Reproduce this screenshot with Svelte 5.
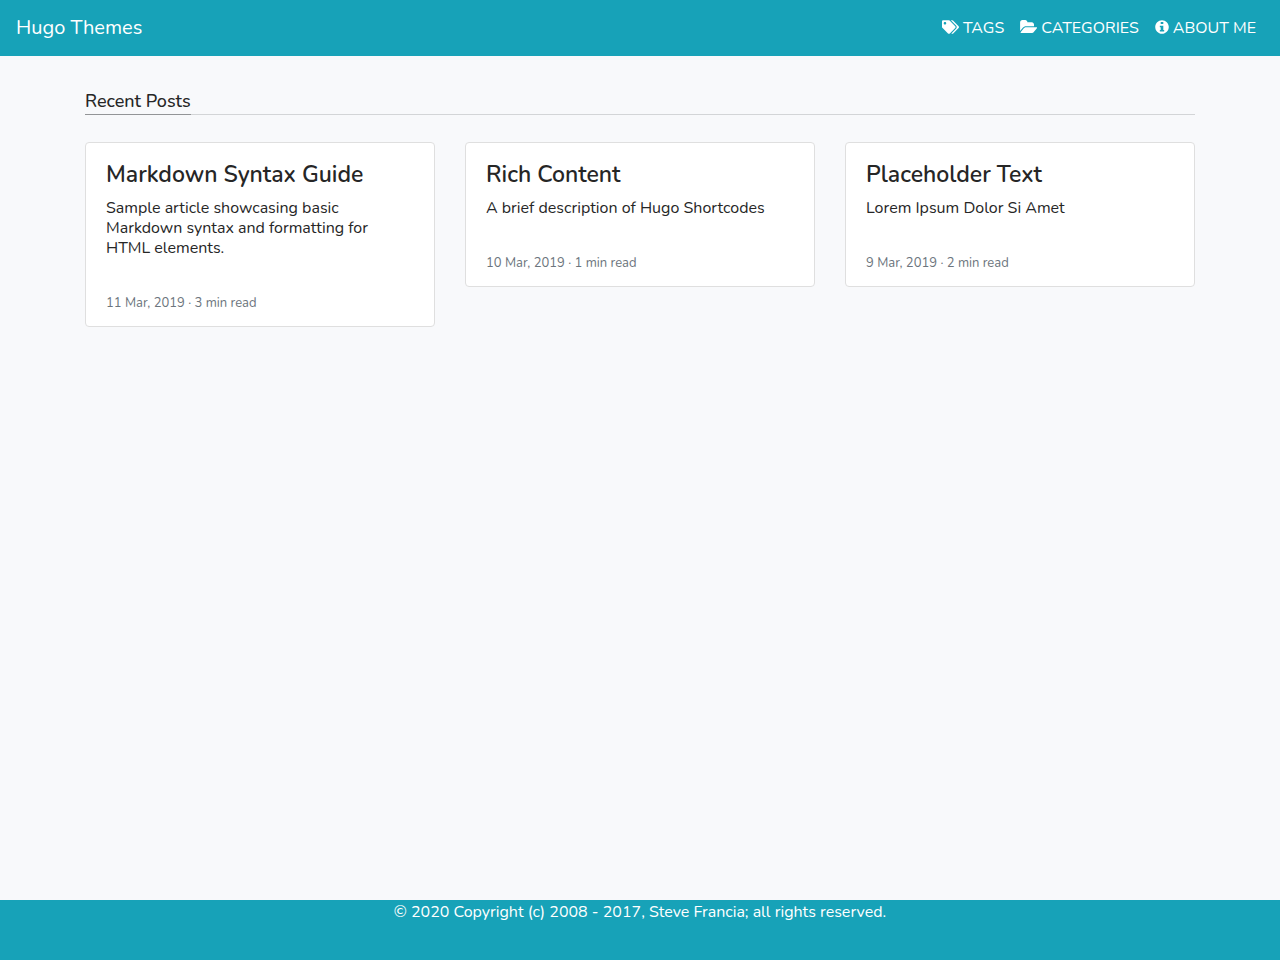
<script>
  const links = [
    { label: 'TAGS', icon: 'tags', href: '#tags' },
    { label: 'CATEGORIES', icon: 'folder', href: '#categories' },
    { label: 'ABOUT ME', icon: 'info', href: '#about' }
  ];

  // Solid glyphs: width in pixels, viewBox and path
  const icons = {
    tags: {
      width: 17,
      box: '0 0 640 512',
      d: 'M497.941 225.941L286.059 14.059A48 48 0 0 0 252.118 0H48C21.49 0 0 21.49 0 48v204.118a48 48 0 0 0 14.059 33.941l211.882 211.882c18.744 18.745 49.136 18.746 67.882 0l204.118-204.118c18.745-18.745 18.745-49.137 0-67.882zM112 160c-26.51 0-48-21.49-48-48s21.49-48 48-48 48 21.49 48 48-21.49 48-48 48zm513.941 133.823L421.823 497.941c-18.745 18.745-49.137 18.745-67.882 0l-.36-.36L527.64 323.522c16.999-16.999 26.36-39.6 26.36-63.64s-9.362-46.641-26.36-63.64L331.397 0h48.721a48 48 0 0 1 33.941 14.059l211.882 211.882c18.745 18.745 18.745 49.137 0 67.882z'
    },
    folder: {
      width: 17,
      box: '0 0 17 14',
      d: 'M16.9 8.2 13.8 12c-.5.6-1.4 1-2.2 1H1.1c-.5 0-.8-.3-.5-.8l3.2-3.9c.5-.6 1.4-1.1 2.2-1.1h10.5c.5 0 .8.5.4 1zM14 4.6v1.6H6c-1.2 0-2.5.7-3.2 1.6L.1 11.1V2.4C.1 1.1 1.1.1 2.4.1h2.8c1.2 0 2.2 1 2.2 2.2h4.4c1.2 0 2.2 1 2.2 2.3z'
    },
    info: {
      width: 14,
      box: '0 0 512 512',
      d: 'M256 8C119.043 8 8 119.083 8 256c0 136.997 111.043 248 248 248s248-111.003 248-248C504 119.083 392.957 8 256 8zM208 72h96v74h-96zM336 420H176v-58h32v-96h-32v-60h128v156h32z'
    }
  };

  const posts = [
    {
      title: 'Markdown Syntax Guide',
      summary: 'Sample article showcasing basic Markdown syntax and formatting for HTML elements.',
      meta: '11 Mar, 2019 · 3 min read'
    },
    {
      title: 'Rich Content',
      summary: 'A brief description of Hugo Shortcodes',
      meta: '10 Mar, 2019 · 1 min read'
    },
    {
      title: 'Placeholder Text',
      summary: 'Lorem Ipsum Dolor Si Amet',
      meta: '9 Mar, 2019 · 2 min read'
    }
  ];
</script>

<div class="page">
  <header>
    <a class="brand" href="#home">Hugo Themes</a>
    <nav>
      {#each links as link}
        <a href={link.href}>
          <svg viewBox={icons[link.icon].box} width={icons[link.icon].width} height="14" aria-hidden="true">
            <path fill-rule="evenodd" d={icons[link.icon].d} />
          </svg>
          {link.label}
        </a>
      {/each}
    </nav>
  </header>

  <main>
    <div class="section-head"><h1>Recent Posts</h1></div>
    <div class="posts">
      {#each posts as post}
        <article>
          <h2><a href="#post">{post.title}</a></h2>
          <p class="summary">{post.summary}</p>
          <p class="meta">{post.meta}</p>
        </article>
      {/each}
    </div>
  </main>

  <footer>© 2020 Copyright (c) 2008 - 2017, Steve Francia; all rights reserved.</footer>
</div>

<style>
  :global(body) {
    background: #f8f9fb;
  }

  .page {
    display: flex;
    flex-direction: column;
    min-height: 100vh;
    font-family: Nunito, Lato, sans-serif;
    font-size: 16px;
    line-height: 24px;
    color: #262626;
    background: #f8f9fb;
  }

  a {
    color: inherit;
    text-decoration: none;
  }

  header {
    display: flex;
    flex-wrap: wrap;
    align-items: center;
    justify-content: space-between;
    padding: 8px 16px;
    color: #fff;
    background: #17a2b8;
  }

  .brand {
    font-size: 20px;
    line-height: 30px;
  }

  nav {
    display: flex;
    flex-wrap: wrap;
  }

  nav a {
    display: flex;
    align-items: center;
    gap: 4px;
    padding: 8px;
  }

  svg {
    margin-bottom: 2px;
    fill: currentColor;
  }

  main {
    flex: 1;
    box-sizing: border-box;
    width: 100%;
    max-width: 1140px;
    margin: 0 auto;
    padding: 32px 15px;
  }

  .section-head {
    display: flex;
    margin-bottom: 27px;
    border-bottom: 1px solid #d3d5d7;
  }

  h1 {
    margin: 0 0 -1px;
    padding-top: 1px;
    border-bottom: 1px solid #939597;
    font-size: 18px;
    line-height: 25px;
    font-weight: 500;
  }

  .posts {
    display: grid;
    grid-template-columns: repeat(auto-fit, minmax(280px, 1fr));
    align-items: start;
    gap: 30px;
  }

  article {
    padding: 16px 20px 13px;
    border: 1px solid #dfdfdf;
    border-radius: 4px;
    background: #fff;
  }

  h2 {
    margin: 0 0 7px;
    font-size: 23px;
    line-height: 32px;
    font-weight: 600;
  }

  .summary {
    margin: 0 0 35px;
    line-height: 20px;
  }

  .meta {
    margin: 0;
    font-size: 13px;
    line-height: 20px;
    color: #6c757d;
  }

  footer {
    min-height: 60px;
    text-align: center;
    color: #fff;
    background: #17a2b8;
  }
</style>
